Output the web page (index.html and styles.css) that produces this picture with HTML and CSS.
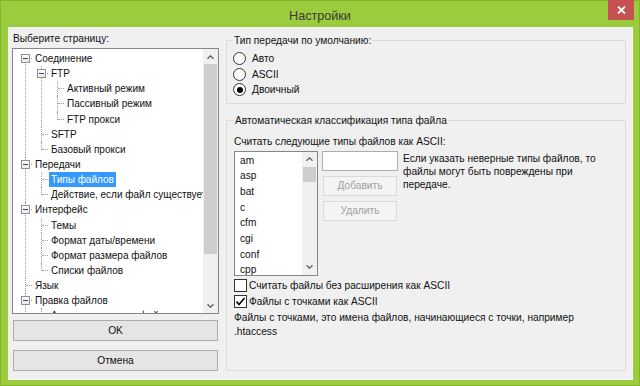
FILE: index.html
```html
<!DOCTYPE html>
<html lang="ru">
<head>
  <meta charset="UTF-8" />
  <title>Настройки</title>
  <link rel="stylesheet" href="styles.css">
</head>
<body>
  <div class="window">
    <div class="titlebar">
      <span class="title">Настройки</span>
      <button class="close" aria-label="Закрыть">
        <svg width="9" height="8" viewBox="0 0 9 8"><path d="M1 0.5 L8 7.5 M8 0.5 L1 7.5" stroke="#fff" stroke-width="1.8"/></svg>
      </button>
    </div>

    <div class="client">
      <!-- Дерево страниц -->
      <div class="left">
        <div class="caption">Выберите страницу:</div>
        <div class="treebox">
          <div class="tree-pane">
            <ul class="tree">
              <li><div class="row"><i class="exp"></i><span class="label">Соединение</span></div>
                <ul>
                  <li><div class="row"><i class="exp"></i><span class="label">FTP</span></div>
                    <ul>
                      <li><div class="row"><span class="label">Активный режим</span></div></li>
                      <li><div class="row"><span class="label">Пассивный режим</span></div></li>
                      <li><div class="row"><span class="label">FTP прокси</span></div></li>
                    </ul>
                  </li>
                  <li><div class="row"><span class="label">SFTP</span></div></li>
                  <li><div class="row"><span class="label">Базовый прокси</span></div></li>
                </ul>
              </li>
              <li><div class="row"><i class="exp"></i><span class="label">Передачи</span></div>
                <ul>
                  <li><div class="row"><span class="label selected">Типы файлов</span></div></li>
                  <li><div class="row"><span class="label">Действие, если файл существует</span></div></li>
                </ul>
              </li>
              <li><div class="row"><i class="exp"></i><span class="label">Интерфейс</span></div>
                <ul>
                  <li><div class="row"><span class="label">Темы</span></div></li>
                  <li><div class="row"><span class="label">Формат даты/времени</span></div></li>
                  <li><div class="row"><span class="label">Формат размера файлов</span></div></li>
                  <li><div class="row"><span class="label">Списки файлов</span></div></li>
                </ul>
              </li>
              <li><div class="row"><span class="label">Язык</span></div></li>
              <li><div class="row"><i class="exp"></i><span class="label">Правка файлов</span></div>
                <ul>
                  <li><div class="row"><span class="label">Ассоциации типов файлов</span></div></li>
                </ul>
              </li>
              <li><div class="row"><span class="label">Обновления</span></div></li>
              <li><div class="row"><span class="label">Журнал</span></div></li>
            </ul>
          </div>
          <div class="vscroll">
            <div class="arrow"><svg width="7" height="4" viewBox="0 0 7 4"><polyline points="0.5,3.8 3.5,0.8 6.5,3.8" fill="none" stroke="#606060" stroke-width="1.3"/></svg></div>
            <div class="thumb tree-thumb"></div>
            <div class="track"></div>
            <div class="arrow"><svg width="7" height="4" viewBox="0 0 7 4"><polyline points="0.5,0.2 3.5,3.2 6.5,0.2" fill="none" stroke="#606060" stroke-width="1.3"/></svg></div>
          </div>
        </div>
        <button class="btn ok">OK</button>
        <button class="btn cancel">Отмена</button>
      </div>

      <!-- Страница настроек -->
      <div class="right">
        <fieldset class="group mode">
          <legend>Тип передачи по умолчанию:</legend>
          <label class="opt"><span class="radio"></span>Авто</label>
          <label class="opt"><span class="radio"></span>ASCII</label>
          <label class="opt"><span class="radio on"></span>Двоичный</label>
        </fieldset>

        <fieldset class="group auto">
          <legend>Автоматическая классификация типа файла</legend>
          <div class="hint">Считать следующие типы файлов как ASCII:</div>
          <div class="types">
            <div class="listbox">
              <ul class="items">
                <li>am</li>
                <li>asp</li>
                <li>bat</li>
                <li>c</li>
                <li>cfm</li>
                <li>cgi</li>
                <li>conf</li>
                <li>cpp</li>
              </ul>
              <div class="vscroll small">
                <div class="arrow"><svg width="7" height="4" viewBox="0 0 7 4"><polyline points="0.5,3.8 3.5,0.8 6.5,3.8" fill="none" stroke="#606060" stroke-width="1.3"/></svg></div>
                <div class="thumb list-thumb"></div>
                <div class="track"></div>
                <div class="arrow"><svg width="7" height="4" viewBox="0 0 7 4"><polyline points="0.5,0.2 3.5,3.2 6.5,0.2" fill="none" stroke="#606060" stroke-width="1.3"/></svg></div>
              </div>
            </div>
            <div class="edit-col">
              <input type="text" class="textbox" />
              <button class="btn small" disabled>Добавить</button>
              <button class="btn small" disabled>Удалить</button>
            </div>
            <div class="warn">Если указать неверные типы файлов, то<br>файлы могут быть повреждены при<br>передаче.</div>
          </div>
          <label class="opt check-row"><span class="check"></span>Считать файлы без расширения как ASCII</label>
          <label class="opt check-row"><span class="check on"><svg width="11" height="11" viewBox="0 0 11 11"><polyline points="1.5,5.5 4,8.5 9.5,2" fill="none" stroke="#000" stroke-width="1.7"/></svg></span>Файлы с точками как ASCII</label>
          <p class="note">Файлы с точками, это имена файлов, начинающиеся с точки, например<br>.htaccess</p>
        </fieldset>
      </div>
    </div>
  </div>
</body>
</html>
```

FILE: styles.css
```css
* {
  box-sizing: border-box;
}
body {
  margin: 0;
  font-family: 'Liberation Sans', Arial, sans-serif;
  font-size: 10.2px;
  color: #111;
  background: #9acc3d;
}

/* Окно */
.window {
  width: 640px;
  height: 386px;
  background: #9acc3d;
  border: 1px solid #86b42f;
  display: flex;
  flex-direction: column;
}
.titlebar {
  height: 26px;
  display: grid;
  grid-template-columns: 1fr auto 1fr;
  align-items: start;
}
.title {
  grid-column: 2;
  font-size: 12.6px;
  line-height: 30px;
  color: #3a3a3a;
}
.close {
  grid-column: 3;
  justify-self: end;
  width: 26px;
  height: 20px;
  margin: -1px 5px 0 0;
  border: none;
  padding: 0;
  background: #c75050;
  display: flex;
  align-items: center;
  justify-content: center;
}

.client {
  flex: 1;
  margin: 0 6px 6px 7px;
  background: #f0f0f0;
  border-right: 1px solid #fafafa;
  border-bottom: 1px solid #fafafa;
  display: flex;
}

/* Левая колонка */
.left {
  width: 211px;
  padding: 4px 0 8px 4px;
  display: flex;
  flex-direction: column;
}
.caption {
  line-height: 15px;
  padding-left: 1px;
}
.treebox {
  margin-top: 2px;
  height: 266px;
  border: 1px solid #828790;
  background: #fff;
  display: flex;
}
.tree-pane {
  flex: 1;
  overflow: hidden;
  padding-top: 2px;
  font-size: 10px;
}
.tree, .tree ul {
  list-style: none;
  margin: 0;
  padding: 0;
}
.tree ul {
  margin-left: -4px;
}
.tree li {
  position: relative;
  padding-left: 20px;
}
.tree li::before {
  content: "";
  position: absolute;
  left: 12px;
  top: 0;
  bottom: 0;
  border-left: 1px dotted #a0a0a0;
}
.tree > li:first-child::before {
  top: 8px;
}
.tree li:last-child::before {
  bottom: auto;
  height: 8px;
}
.tree li::after {
  content: "";
  position: absolute;
  left: 13px;
  top: 7px;
  width: 6px;
  border-top: 1px dotted #a0a0a0;
}
.row {
  height: 15.15px;
  line-height: 15.15px;
  white-space: nowrap;
}
.label {
  display: inline-block;
  padding: 0 2px;
}
.label.selected {
  background: #3399ff;
  color: #fff;
}
.exp {
  position: absolute;
  left: 8px;
  top: 3px;
  width: 9px;
  height: 9px;
  border: 1px solid #919191;
  background: linear-gradient(#fff, #e8e8e8);
  z-index: 1;
}
.exp::after {
  content: "";
  position: absolute;
  left: 1px;
  top: 3px;
  width: 5px;
  height: 1px;
  background: #2c4a7c;
}

/* Полоса прокрутки */
.vscroll {
  width: 15px;
  background: #f0f0f0;
  display: flex;
  flex-direction: column;
}
.vscroll .arrow {
  height: 15px;
  display: flex;
  align-items: center;
  justify-content: center;
}
.vscroll .thumb {
  margin: 0 1px;
  background: #cdcdcd;
}
.tree-thumb {
  height: 190px;
}
.list-thumb {
  height: 15px;
}
.vscroll .track {
  flex: 1;
}

/* Кнопки */
.btn {
  font: inherit;
  color: #111;
  height: 21px;
  padding: 0;
  border: 1px solid #adadad;
  background: #e5e5e5;
}
.left .btn {
  margin-left: 1px;
  width: 205px;
}
.ok {
  margin-top: 6px;
}
.cancel {
  margin-top: 9px;
}
.btn:disabled {
  color: #a0a0a0;
  border-color: #d9d9d9;
  background: #f4f4f4;
}

/* Правая колонка */
.right {
  flex: 1;
  padding: 6px 6px 8px 7px;
  display: flex;
  flex-direction: column;
}
.group {
  margin: 0;
  border: 1px solid #dcdcdc;
  min-width: 0;
}
.group legend {
  padding: 0 1px;
  line-height: 15px;
}
.mode {
  padding: 3px 0 5px 6px;
}
.auto {
  margin-top: 9px;
  flex: 1;
  padding: 6px 0 0 7px;
}
.opt {
  display: flex;
  align-items: center;
  height: 15.5px;
  gap: 6px;
  white-space: nowrap;
}
.radio {
  width: 13px;
  height: 13px;
  border: 1px solid #333;
  border-radius: 50%;
  background: #fff;
  display: flex;
  align-items: center;
  justify-content: center;
}
.radio.on::after {
  content: "";
  width: 6px;
  height: 6px;
  border-radius: 50%;
  background: #000;
}

.hint {
  line-height: 15px;
}
.types {
  margin-top: 2px;
  height: 125px;
  display: flex;
  align-items: flex-start;
}
.listbox {
  width: 84px;
  height: 125px;
  border: 1px solid #828790;
  background: #fff;
  display: flex;
}
.items {
  flex: 1;
  list-style: none;
  margin: 0;
  padding: 1px 0 0 5px;
  overflow: hidden;
}
.items li {
  height: 15.7px;
  line-height: 15.7px;
}
.edit-col {
  margin-left: 4px;
  width: 76px;
  flex: none;
  display: flex;
  flex-direction: column;
}
.textbox {
  height: 20px;
  width: 76px;
  border: 1px solid #abadb3;
  background: #fff;
  outline: none;
}
.btn.small {
  width: 74px;
  height: 20px;
  margin: 5px 0 0 1px;
}
.warn {
  margin: 1px 0 0 5px;
  line-height: 13px;
  white-space: nowrap;
}

.check-row {
  height: 16px;
  gap: 2px;
}
.check-row:first-of-type {
  margin-top: 2px;
}
.check {
  width: 13px;
  height: 13px;
  border: 1px solid #333;
  background: #fff;
  display: flex;
  align-items: center;
  justify-content: center;
}
.note {
  margin: 1px 0 0;
  line-height: 14px;
  white-space: nowrap;
}
```
